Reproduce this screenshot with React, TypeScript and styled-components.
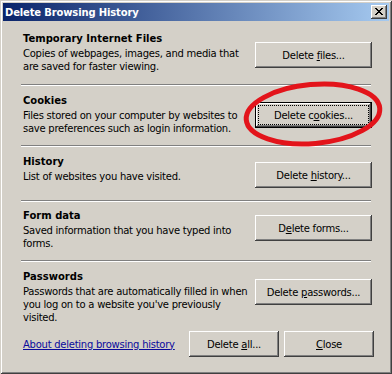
import React from "react";
import styled, { createGlobalStyle } from "styled-components";

const GlobalStyle = createGlobalStyle`
  html, body { margin: 0; padding: 0; background: #D4D0C8; }
  body { font-family: "DejaVu Sans", Verdana, sans-serif; }
`;

const Window = styled.div`
  position: relative;
  box-sizing: border-box;
  width: 392px;
  height: 374px;
  padding: 3px;
  background: #d4d0c8;
  box-shadow: inset 1px 1px #d4d0c8, inset -1px -1px #404040, inset 2px 2px #ffffff,
    inset -2px -2px #808080;
  display: flex;
  flex-direction: column;
  font: 10px/13px "DejaVu Sans", Verdana, sans-serif;
  letter-spacing: -0.25px;
  color: #000;
`;

const TitleBar = styled.div`
  height: 18px;
  flex-shrink: 0;
  display: flex;
  align-items: center;
  justify-content: space-between;
  padding: 0 2px;
  background: linear-gradient(to right, #0a246a, #a6caf0);
`;

const Title = styled.span`
  color: #fff;
  font-weight: bold;
  letter-spacing: -0.15px;
  white-space: nowrap;
`;

const CaptionButton = styled.div`
  width: 16px;
  height: 14px;
  box-sizing: border-box;
  padding: 3px 0 0 4px;
  background: #d4d0c8;
  box-shadow: inset -1px -1px #404040, inset 1px 1px #ffffff, inset -2px -2px #808080,
    inset 2px 2px #d4d0c8;
  svg {
    display: block;
  }
`;

const Client = styled.div`
  flex: 1;
  display: flex;
  flex-direction: column;
  padding: 0 17px 0 18px;
`;

const Section = styled.div<{ $h: number }>`
  height: ${(p) => p.$h}px;
  flex-shrink: 0;
  display: flex;
  align-items: flex-start;
  justify-content: space-between;
`;

const TextBlock = styled.div<{ $top: number }>`
  margin-top: ${(p) => p.$top}px;
  padding-left: 2px;
`;

const Heading = styled.div`
  font-weight: bold;
  letter-spacing: 0;
  margin-bottom: 2px;
  white-space: nowrap;
`;

const Line = styled.div`
  white-space: nowrap;
`;

const Divider = styled.div`
  height: 0;
  flex-shrink: 0;
  border-top: 1px solid #808080;
  border-bottom: 1px solid #ffffff;
  margin-right: 1px;
`;

const Button = styled.button<{ $w: number; $top?: number; $default?: boolean }>`
  position: relative;
  box-sizing: border-box;
  flex-shrink: 0;
  width: ${(p) => p.$w}px;
  height: 26px;
  margin: ${(p) => p.$top ?? 0}px 0 0 0;
  padding: 0;
  font: inherit;
  letter-spacing: inherit;
  color: #000;
  background: #d4d0c8;
  border: ${(p) => (p.$default ? "1px solid #000" : "none")};
  box-shadow: inset -1px -1px #404040, inset 1px 1px #ffffff, inset -2px -2px #808080,
    inset 2px 2px #d4d0c8;
  white-space: nowrap;
  cursor: default;
  &::after {
    content: "";
    display: ${(p) => (p.$default ? "block" : "none")};
    position: absolute;
    left: 2px;
    top: 2px;
    right: 2px;
    bottom: 2px;
    border: 1px dotted #000;
  }
`;

const Key = styled.span`
  text-decoration: underline;
`;

const Footer = styled.div`
  height: 26px;
  flex-shrink: 0;
  display: flex;
  align-items: center;
  gap: 5px;
  margin-right: -2px;
`;

const HelpLink = styled.a`
  flex: 1;
  padding-left: 2px;
  color: #0a0a9c;
  text-decoration: underline;
  white-space: nowrap;
`;

const Annotation = styled.svg`
  position: absolute;
  left: 0;
  top: 0;
  pointer-events: none;
`;

type Item = {
  title: string;
  lines: string[];
  h: number;
  textTop: number;
  btnTop: number;
  label: React.ReactNode;
  isDefault?: boolean;
};

const items: Item[] = [
  {
    title: "Temporary Internet Files",
    lines: ["Copies of webpages, images, and media that", "are saved for faster viewing."],
    h: 63,
    textTop: 11,
    btnTop: 21,
    label: (
      <>
        Delete <Key>f</Key>iles...
      </>
    ),
  },
  {
    title: "Cookies",
    lines: ["Files stored on your computer by websites to", "save preferences such as login information."],
    h: 59,
    textTop: 8,
    btnTop: 16,
    isDefault: true,
    label: (
      <>
        Delete c<Key>o</Key>okies...
      </>
    ),
  },
  {
    title: "History",
    lines: ["List of websites you have visited."],
    h: 53,
    textTop: 8,
    btnTop: 15,
    label: (
      <>
        Delete <Key>h</Key>istory...
      </>
    ),
  },
  {
    title: "Form data",
    lines: ["Saved information that you have typed into", "forms."],
    h: 58,
    textTop: 7,
    btnTop: 13,
    label: (
      <>
        D<Key>e</Key>lete forms...
      </>
    ),
  },
  {
    title: "Passwords",
    lines: [
      "Passwords that are automatically filled in when",
      "you log on to a website you've previously",
      "visited.",
    ],
    h: 69,
    textTop: 8,
    btnTop: 17,
    label: (
      <>
        Delete <Key>p</Key>asswords...
      </>
    ),
  },
];

const CloseGlyph = () => (
  <svg width="8" height="7" viewBox="0 0 8 7" shapeRendering="crispEdges">
    <path
      fill="#000"
      d="M0 0h2v1H0z M6 0h2v1H6z M1 1h2v1H1z M5 1h2v1H5z M2 2h4v1H2z M3 3h2v1H3z M2 4h4v1H2z M1 5h2v1H1z M5 5h2v1H5z M0 6h2v1H0z M6 6h2v1H6z"
    />
  </svg>
);

export default function App() {
  return (
    <>
      <GlobalStyle />
      <Window>
        <TitleBar>
          <Title>Delete Browsing History</Title>
          <CaptionButton>
            <CloseGlyph />
          </CaptionButton>
        </TitleBar>
        <Client>
          {items.map((it, i) => (
            <React.Fragment key={it.title}>
              {i > 0 && <Divider />}
              <Section $h={it.h}>
                <TextBlock $top={it.textTop}>
                  <Heading>{it.title}</Heading>
                  {it.lines.map((l) => (
                    <Line key={l}>{l}</Line>
                  ))}
                </TextBlock>
                <Button $w={117} $top={it.btnTop} $default={it.isDefault}>
                  {it.label}
                </Button>
              </Section>
            </React.Fragment>
          ))}
          <Footer>
            <HelpLink href="#">About deleting browsing history</HelpLink>
            <Button $w={90}>
              Delete <Key>a</Key>ll...
            </Button>
            <Button $w={90}>
              <Key>C</Key>lose
            </Button>
          </Footer>
        </Client>
        <Annotation width="392" height="374" viewBox="0 0 392 374">
          <ellipse
            cx="313"
            cy="114"
            rx="67"
            ry="29.5"
            fill="none"
            stroke="#e3141b"
            strokeWidth="5"
            transform="rotate(-5 313 114)"
          />
        </Annotation>
      </Window>
    </>
  );
}
